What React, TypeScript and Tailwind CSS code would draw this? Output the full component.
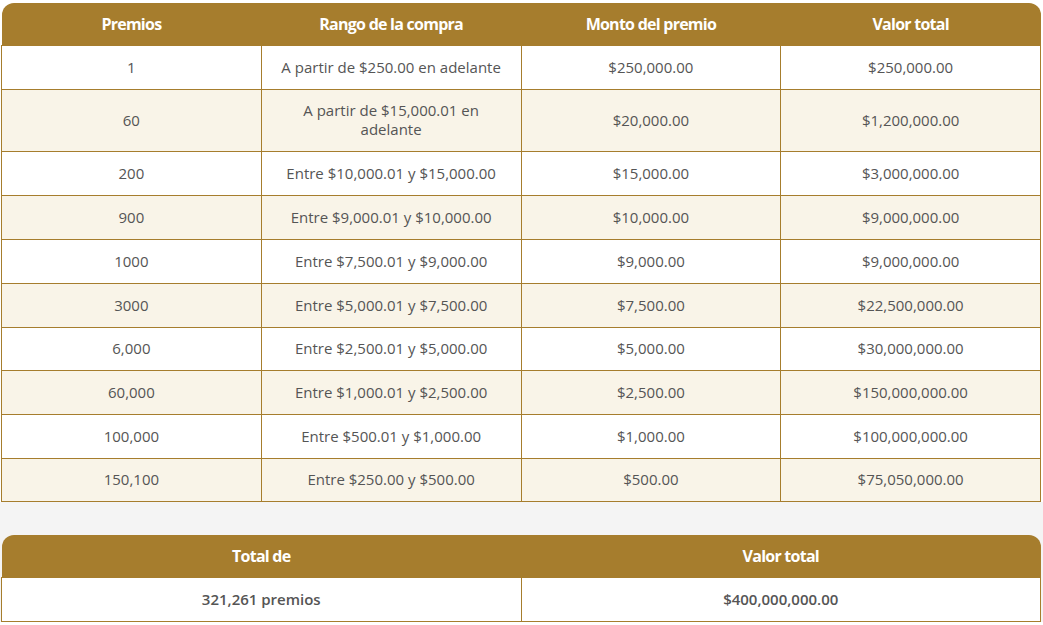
import React from "react";

const rows = [
  ["1", "A partir de $250.00 en adelante", "$250,000.00", "$250,000.00"],
  ["60", "A partir de $15,000.01 en adelante", "$20,000.00", "$1,200,000.00"],
  ["200", "Entre $10,000.01 y $15,000.00", "$15,000.00", "$3,000,000.00"],
  ["900", "Entre $9,000.01 y $10,000.00", "$10,000.00", "$9,000,000.00"],
  ["1000", "Entre $7,500.01 y $9,000.00", "$9,000.00", "$9,000,000.00"],
  ["3000", "Entre $5,000.01 y $7,500.00", "$7,500.00", "$22,500,000.00"],
  ["6,000", "Entre $2,500.01 y $5,000.00", "$5,000.00", "$30,000,000.00"],
  ["60,000", "Entre $1,000.01 y $2,500.00", "$2,500.00", "$150,000,000.00"],
  ["100,000", "Entre $500.01 y $1,000.00", "$1,000.00", "$100,000,000.00"],
  ["150,100", "Entre $250.00 y $500.00", "$500.00", "$75,050,000.00"],
];

// alturas medidas de la captura
const heights = [
  "h-[44px]",
  "h-[62px]",
  "h-[44px]",
  "h-[44px]",
  "h-[44px]",
  "h-[44px]",
  "h-[43px]",
  "h-[44px]",
  "h-[44px]",
  "h-[43px]",
];

const headers = ["Premios", "Rango de la compra", "Monto del premio", "Valor total"];

export default function App() {
  return (
    <div className="min-h-screen bg-white font-['Open_Sans',sans-serif] text-[15px] text-[#555]">
      <div className="pt-[3px] pl-[1px]">
        <table className="w-[1040px] table-fixed border-collapse">
          <thead>
            <tr className="h-[42px] bg-[#a67d2d] text-white">
              {headers.map((h, i) => (
                <th
                  key={h}
                  className={`text-[16px] font-bold tracking-[-0.75px] ${i === 0 ? "rounded-tl-[12px]" : ""} ${i === 3 ? "rounded-tr-[12px]" : ""}`}
                >
                  {h}
                </th>
              ))}
            </tr>
          </thead>
          <tbody>
            {rows.map((r, idx) => (
              <tr
                key={idx}
                className={`${heights[idx]} ${idx % 2 === 1 ? "bg-[#f9f4e8]" : "bg-white"}`}
              >
                {r.map((c, j) => (
                  <td
                    key={j}
                    className="border border-[#a67d2d] px-3 text-center leading-[19px]"
                  >
                    {c}
                  </td>
                ))}
              </tr>
            ))}
          </tbody>
        </table>
      </div>
      <div className="bg-[#f4f4f4] pt-[33px] pl-[1px]">
        <table className="w-[1040px] table-fixed border-collapse">
          <thead>
            <tr className="h-[43px] bg-[#a67d2d] text-white">
              <th className="rounded-tl-[12px] text-[16px] font-bold tracking-[-0.75px]">Total de</th>
              <th className="rounded-tr-[12px] text-[16px] font-bold tracking-[-0.75px]">Valor total</th>
            </tr>
          </thead>
          <tbody>
            <tr className="h-[44px] bg-white font-semibold">
              <td className="border border-[#a67d2d] text-center">321,261 premios</td>
              <td className="border border-[#a67d2d] text-center">$400,000,000.00</td>
            </tr>
          </tbody>
        </table>
      </div>
    </div>
  );
}
